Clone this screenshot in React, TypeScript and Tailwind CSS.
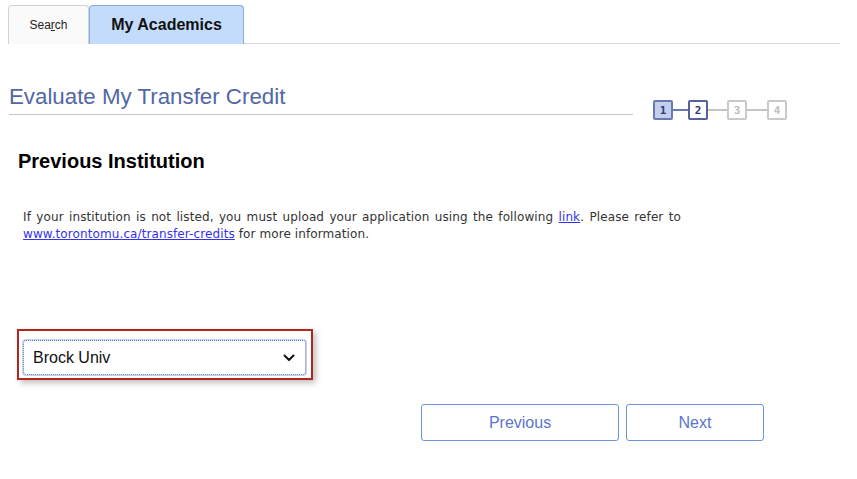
import React from "react";

const STEPS = [
  { n: "1", box: "border-[#6b79b3] bg-[#c3cfeb] text-[#2b3a80]", line: "w-[15px] bg-[#6b79b3]" },
  { n: "2", box: "border-[#56629f] bg-white text-[#2b3a80]", line: "w-[19px] bg-[#c4c4c4]" },
  { n: "3", box: "border-[#c9c9c9] bg-white text-[#bdbdbd]", line: "w-[20px] bg-[#c4c4c4]" },
  { n: "4", box: "border-[#c9c9c9] bg-white text-[#bdbdbd]", line: "" },
];

function StepTrail() {
  return (
    <div className="flex items-center">
      {STEPS.map((s) => (
        <div key={s.n} className="flex items-center">
          <div
            className={`grid h-[20px] w-[20px] place-items-center rounded-[2px] border-2 text-[11px] font-bold leading-none font-['DejaVu_Sans_Mono',monospace] ${s.box}`}
          >
            {s.n}
          </div>
          {s.line && <div className={`h-[1.5px] ${s.line}`} />}
        </div>
      ))}
    </div>
  );
}

export default function App() {
  return (
    <div className="min-h-screen w-full bg-white font-['Liberation_Sans',Arial,sans-serif] text-black">
      {/* tab bar */}
      <div className="flex pl-[8px] pt-[5px] pr-[17px]">
        <div className="flex h-[39px] w-[81px] items-center justify-center rounded-t-[4px] border border-b-0 border-[#d2d2d2] bg-[#fafafa] text-[12px] text-[#222]">
          Sea<span className="underline">r</span>ch
        </div>
        <div className="flex h-[39px] w-[155px] items-center justify-center rounded-t-[4px] border border-b-0 border-[#8ea8e2] bg-[#c4dcfb] text-[16px] font-bold text-[#111]">
          My Academics
        </div>
        <div className="flex-1 border-b border-[#d4d6de]" />
      </div>

      {/* title row */}
      <div className="mt-[40px] flex items-start pl-[9px]">
        <div className="w-[624px] border-b border-[#c4c4c4] pb-[4px] text-[22.3px] leading-[26px] text-[#5167a6]">
          Evaluate My Transfer Credit
        </div>
        <div className="ml-[20px] mt-[16px]">
          <StepTrail />
        </div>
      </div>

      <h1 className="mt-[29px] pl-[18px] text-[20px] font-bold leading-[24px] text-black">
        Previous Institution
      </h1>

      <p className="mt-[36px] ml-[23px] w-[658px] text-justify font-['DejaVu_Sans',Verdana,sans-serif] text-[12px] leading-[17px] tracking-[0.1px] text-[#333]">
        If your institution is not listed, you must upload your application using the following{" "}
        <a className="text-[#3333ee] underline" href="#">link</a>. Please refer to{" "}
        <a className="text-[#3333ee] underline" href="#">www.torontomu.ca/transfer-credits</a> for more information.
      </p>

      <div className="mt-[86px] ml-[17px] w-[296px] border-2 border-[#b3261e] px-[4px] pt-[9px] pb-[3px] shadow-[3px_3px_6px_rgba(0,0,0,0.25)]">
        <div className="flex h-[35px] w-[283px] items-center justify-between rounded-[3px] border border-dotted border-[#4f6fc0] bg-white pl-[9px] pr-[10px] shadow-[0_0_0_1px_rgba(90,120,200,0.35)]">
          <span className="text-[16px] text-[#111]">Brock Univ</span>
          <svg width="12" height="8" viewBox="0 0 12 8" fill="none">
            <path d="M1.5 1.5 L6 6 L10.5 1.5" stroke="#111" strokeWidth="2" strokeLinecap="round" strokeLinejoin="round" />
          </svg>
        </div>
      </div>

      <div className="mt-[24px] ml-[421px] flex gap-[7px]">
        <button className="h-[37px] w-[198px] rounded-[3px] border border-[#6f92e2] bg-white text-[16px] text-[#5a74d0]">
          Previous
        </button>
        <button className="h-[37px] w-[138px] rounded-[3px] border border-[#6f92e2] bg-white text-[16px] text-[#5a74d0]">
          Next
        </button>
      </div>
    </div>
  );
}
